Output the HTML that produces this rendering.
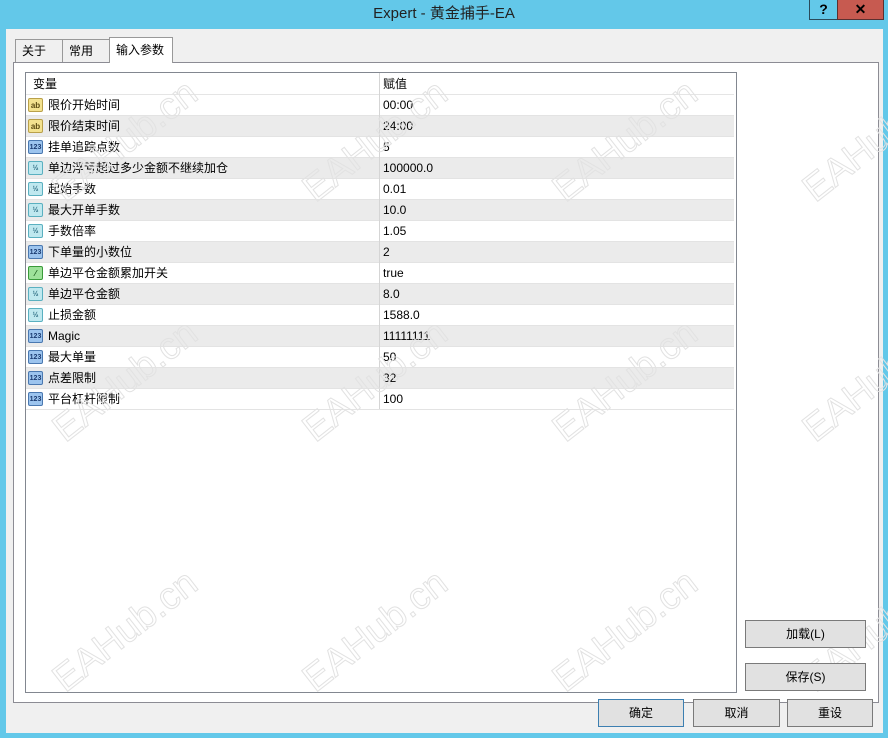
<!DOCTYPE html>
<html><head><meta charset="utf-8"><style>
*{margin:0;padding:0;box-sizing:border-box}
body{width:888px;height:738px;background:#63c8e9;position:relative;overflow:hidden;font-family:"Liberation Sans","Noto Sans CJK SC",sans-serif;font-size:12px;color:#000}
.abs{position:absolute}
.title{left:0;top:0;width:888px;height:29px;text-align:center;line-height:28px;font-size:15px;color:#222}
.help{left:809px;top:0;width:29px;height:20px;border:1px solid #2a4a5a;border-top:none;text-align:center;font-weight:bold;font-size:14px;line-height:19px}
.close{left:837px;top:0;width:47px;height:20px;background:#c75a50;border:1px solid #5a3030;border-top:none;text-align:center;font-weight:bold;font-size:14px;line-height:19px}
.client{left:6px;top:29px;width:877px;height:704px;background:#f0f0f0}
.tab{height:23px;border:1px solid #999;border-bottom:none;background:#f0f0f0;padding-left:6px;line-height:22px;font-size:12px}
.panel{left:13px;top:62px;width:866px;height:641px;border:1px solid #8c8c94;background:#fff}
.table{left:25px;top:72px;width:712px;height:621px;border:1px solid #828790;background:#fff}
.row{position:absolute;left:0;width:708px;height:21px;border-bottom:1px solid #e3e3e3;line-height:20px}
.row.g{background:#ebebeb}
.c1{position:absolute;left:22px}
.c2{position:absolute;left:357px}
.div{position:absolute;left:353px;top:0;width:1px;height:336px;background:#d5d5d5}
.ic{position:absolute;left:2px;top:3px;width:15px;height:14px;border-radius:2px;font-size:8px;line-height:13px;text-align:center;font-weight:bold}
.ab{background:#f3e28f;border:1px solid #b9a04a;color:#5a4a10}
.n{background:#9cc4ee;border:1px solid #4a78b0;color:#1a3a70;font-size:7px}
.h{background:#bfe8ef;border:1px solid #5ab0c0;color:#2a6a80;font-size:7px}
.b{background:#9ee29a;border:1px solid #3a9a3a;color:#1a5a1a}
.btn{position:absolute;background:#e1e1e1;border:1px solid #7a7a7a;text-align:center;font-size:12px}
.wm{position:absolute;font-size:38px;color:transparent;-webkit-text-stroke:1px #e2e2e2;transform:rotate(-38deg);font-family:"Liberation Sans",sans-serif;white-space:nowrap}
</style></head><body>
<div class="abs title">Expert - 黄金捕手-EA</div>
<div class="abs help">?</div>
<div class="abs close">✕</div>
<div class="abs client"></div>
<div class="abs panel"></div>
<div class="abs tab" style="left:15px;top:39px;width:48px">关于</div>
<div class="abs tab" style="left:62px;top:39px;width:48px">常用</div>
<div class="abs tab" style="left:109px;top:37px;width:64px;height:26px;background:#fff;line-height:24px">输入参数</div>
<div class="abs table">
<div class="row" style="top:0;height:22px;border-bottom:1px solid #e5e5e5;background:#fff;line-height:22px"><span class="c1" style="left:7px">变量</span><span class="c2">赋值</span></div>
<div class="row" style="top:22px"><span class="ic ab">ab</span><span class="c1">限价开始时间</span><span class="c2">00:00</span></div>
<div class="row g" style="top:43px"><span class="ic ab">ab</span><span class="c1">限价结束时间</span><span class="c2">24:00</span></div>
<div class="row" style="top:64px"><span class="ic n">123</span><span class="c1">挂单追踪点数</span><span class="c2">5</span></div>
<div class="row g" style="top:85px"><span class="ic h">½</span><span class="c1">单边浮亏超过多少金额不继续加仓</span><span class="c2">100000.0</span></div>
<div class="row" style="top:106px"><span class="ic h">½</span><span class="c1">起始手数</span><span class="c2">0.01</span></div>
<div class="row g" style="top:127px"><span class="ic h">½</span><span class="c1">最大开单手数</span><span class="c2">10.0</span></div>
<div class="row" style="top:148px"><span class="ic h">½</span><span class="c1">手数倍率</span><span class="c2">1.05</span></div>
<div class="row g" style="top:169px"><span class="ic n">123</span><span class="c1">下单量的小数位</span><span class="c2">2</span></div>
<div class="row" style="top:190px"><span class="ic b">⁄</span><span class="c1">单边平仓金额累加开关</span><span class="c2">true</span></div>
<div class="row g" style="top:211px"><span class="ic h">½</span><span class="c1">单边平仓金额</span><span class="c2">8.0</span></div>
<div class="row" style="top:232px"><span class="ic h">½</span><span class="c1">止损金额</span><span class="c2">1588.0</span></div>
<div class="row g" style="top:253px"><span class="ic n">123</span><span class="c1">Magic</span><span class="c2">11111111</span></div>
<div class="row" style="top:274px"><span class="ic n">123</span><span class="c1">最大单量</span><span class="c2">50</span></div>
<div class="row g" style="top:295px"><span class="ic n">123</span><span class="c1">点差限制</span><span class="c2">32</span></div>
<div class="row" style="top:316px"><span class="ic n">123</span><span class="c1">平台杠杆限制</span><span class="c2">100</span></div>
<div class="div"></div>
</div>
<div class="wm" style="left:40px;top:120px">EAHub.cn</div>
<div class="wm" style="left:290px;top:120px">EAHub.cn</div>
<div class="wm" style="left:540px;top:120px">EAHub.cn</div>
<div class="wm" style="left:790px;top:120px">EAHub.cn</div>
<div class="wm" style="left:40px;top:360px">EAHub.cn</div>
<div class="wm" style="left:290px;top:360px">EAHub.cn</div>
<div class="wm" style="left:540px;top:360px">EAHub.cn</div>
<div class="wm" style="left:790px;top:360px">EAHub.cn</div>
<div class="wm" style="left:40px;top:610px">EAHub.cn</div>
<div class="wm" style="left:290px;top:610px">EAHub.cn</div>
<div class="wm" style="left:540px;top:610px">EAHub.cn</div>
<div class="wm" style="left:790px;top:610px">EAHub.cn</div>
<div class="btn" style="left:745px;top:620px;width:121px;height:28px;line-height:26px">加载(L)</div>
<div class="btn" style="left:745px;top:663px;width:121px;height:28px;line-height:26px">保存(S)</div>
<div class="btn" style="left:598px;top:699px;width:86px;height:28px;line-height:26px;border-color:#3c7fb1">确定</div>
<div class="btn" style="left:693px;top:699px;width:87px;height:28px;line-height:26px">取消</div>
<div class="btn" style="left:787px;top:699px;width:86px;height:28px;line-height:26px">重设</div>
</body></html>
